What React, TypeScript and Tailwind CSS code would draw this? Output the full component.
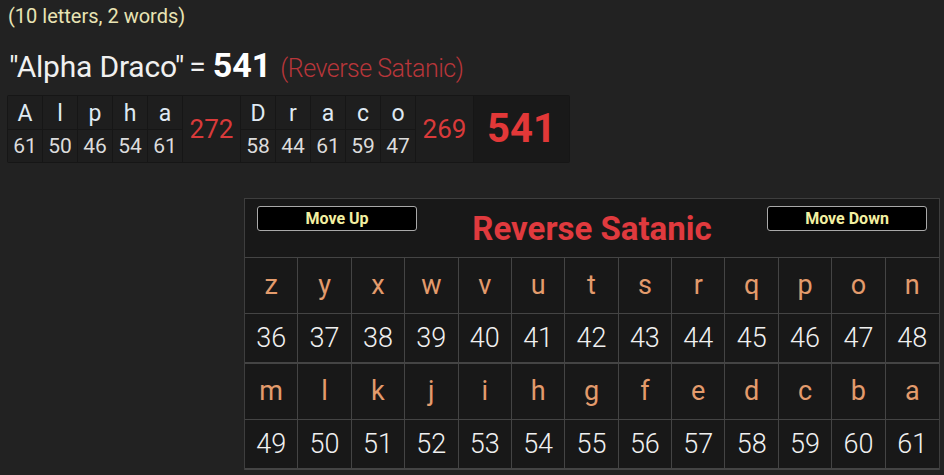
import React from "react";

const words = [
  {
    letters: [
      ["A", 61],
      ["l", 50],
      ["p", 46],
      ["h", 54],
      ["a", 61],
    ] as [string, number][],
    total: 272,
  },
  {
    letters: [
      ["D", 58],
      ["r", 44],
      ["a", 61],
      ["c", 59],
      ["o", 47],
    ] as [string, number][],
    total: 269,
  },
];

const rows = [
  "zyxwvutsrqpon".split(""),
  "mlkjihgfedcba".split(""),
];

function Breakdown() {
  return (
    <div className="flex h-[68px] w-[563px] rounded-[2px] bg-[#161616] p-px">
      {words.map((word, wi) => (
        <div key={wi} className="flex">
          {word.letters.map(([ch, val], i) => (
            <div key={i} className="flex w-[35px] flex-col">
              <div className="flex h-[34px] items-center justify-center border-b border-r border-[#161616] bg-[#1e1e1e] pt-[2px] text-[23px] leading-none text-[#dfe9f2]">
                {ch}
              </div>
              <div className="flex h-[32px] items-center justify-center border-r border-[#161616] bg-[#1e1e1e] text-[21px] leading-none text-[#dcdcdc]">
                {val}
              </div>
            </div>
          ))}
          <div className="flex w-[58px] items-center justify-center border-r border-[#161616] bg-[#1e1e1e] text-[26px] text-[#d93a3a]">
            {word.total}
          </div>
        </div>
      ))}
      <div className="flex flex-1 items-center justify-center bg-[#191919] text-[40px] font-bold leading-none text-[#e23838]">
        541
      </div>
    </div>
  );
}

function CipherTable() {
  return (
    <div className="w-[696px] border border-b-0 border-[#3e3e3e] bg-[#181818]">
      <div className="flex h-[59px] items-start justify-between border-b border-[#444] px-[12px] pt-[7px]">
        <button className="h-[25px] w-[160px] rounded-[3px] border border-[#a9a9a9] bg-black text-[16px] font-bold leading-none text-[#f3f0a2]">
          Move Up
        </button>
        <div className="pt-[5px] text-[33px] font-bold leading-[36px] text-[#e03a3e]">
          Reverse Satanic
        </div>
        <button className="h-[25px] w-[160px] rounded-[3px] border border-[#a9a9a9] bg-black text-[16px] font-bold leading-none text-[#f3f0a2]">
          Move Down
        </button>
      </div>
      {rows.map((row, ri) => (
        <div key={ri}>
          <div className="grid h-[56px] grid-cols-13">
            {row.map((ch, i) => (
              <div
                key={ch}
                className={
                  i === 12
                    ? "flex items-center justify-center border-b border-[#444] text-[27px] text-[#e39b6c]"
                    : "flex items-center justify-center border-b border-r border-[#444] text-[27px] text-[#e39b6c]"
                }
              >
                {ch}
              </div>
            ))}
          </div>
          <div className="grid h-[50px] grid-cols-13">
            {row.map((ch, i) => (
              <div
                key={ch}
                className={
                  i === 12
                    ? "flex items-center justify-center border-b-2 border-[#444] text-[27px] font-light text-[#f0f0f0]"
                    : "flex items-center justify-center border-b-2 border-r border-[#444] text-[27px] font-light text-[#f0f0f0]"
                }
              >
                {36 + ri * 13 + i}
              </div>
            ))}
          </div>
        </div>
      ))}
    </div>
  );
}

export default function App() {
  return (
    <div
      className="h-[475px] w-[944px] overflow-hidden bg-[#222222] pl-[7px] pt-[3px]"
      style={{ fontFamily: "Roboto, 'Liberation Sans', sans-serif" }}
    >
      <div className="pl-px text-[20px] leading-[26px] text-[#e9e4b4]">
        (10 letters, 2 words)
      </div>
      <div className="mt-[17px] flex h-[38px] items-baseline pl-[2px] text-[30px] leading-[38px] text-[#f0f0f0]">
        <span className="tracking-[-0.2px]">"Alpha Draco"</span>
        <span className="ml-[5px]">=</span>
        <span className="ml-[7px] text-[34px] font-bold text-white">541</span>
        <span className="ml-[9px] text-[25px] font-light tracking-[-0.5px] text-[#b8363a]">
          (Reverse Satanic)
        </span>
      </div>
      <div className="mt-[11px]">
        <Breakdown />
      </div>
      <div className="mt-[35px] flex justify-end pr-[4px]">
        <CipherTable />
      </div>
    </div>
  );
}
